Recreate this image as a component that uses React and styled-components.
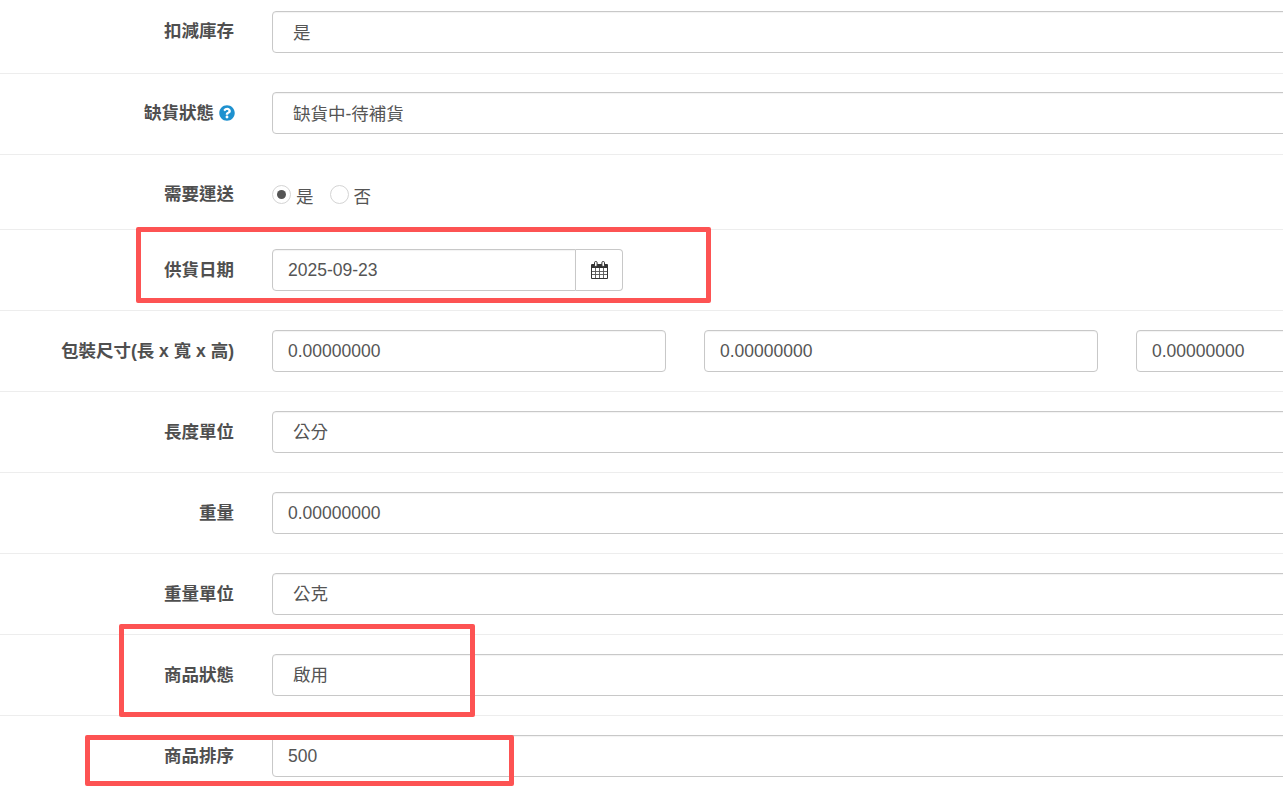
import React from 'react';
import styled, { createGlobalStyle } from 'styled-components';
import { FaQuestionCircle } from 'react-icons/fa';

const GlobalStyle = createGlobalStyle`
  html, body {
    margin: 0;
    height: 100%;
    overflow: hidden;
    background: #ffffff;
  }
  body {
    font-family: "Liberation Sans", "Noto Sans CJK TC", sans-serif;
    font-size: 17.5px;
    color: #555555;
  }
`;

const Page = styled.div`
  position: relative;
  width: 1283px;
  height: 800px;
  overflow: hidden;
`;

const Form = styled.form`
  margin: 0;
`;

const Row = styled.div`
  display: flex;
  align-items: flex-start;
  box-sizing: border-box;
  height: ${({ $height }) => $height || 81}px;
  padding-top: ${({ $top }) => $top ?? 19}px;
  border-bottom: 1px solid #ededed;
  &:last-child {
    border-bottom: none;
  }
`;

const Label = styled.label`
  flex: 0 0 234px;
  display: flex;
  justify-content: flex-end;
  align-items: center;
  gap: 5px;
  height: ${({ $raised }) => ($raised ? '40px' : '42px')};
  margin-right: 38px;
  font-weight: 700;
  font-size: 17.5px;
  line-height: 24px;
  color: #4f4f4f;
  white-space: nowrap;
`;

const Input = styled.input`
  box-sizing: border-box;
  width: ${({ $width }) => $width || '1100px'};
  flex: none;
  height: 42px;
  padding: 1px 15px 0;
  background: #ffffff;
  border: 1px solid #c8c8c8;
  border-radius: 4px;
  font-family: inherit;
  font-size: 17.5px;
  color: #555555;
  outline: none;
  box-shadow: inset 0 1px 1px rgba(0, 0, 0, 0.05);
`;

const SelectInput = styled(Input)`
  padding: 0 20px ${({ $lowered }) => ($lowered ? '1px' : '3px')};
`;

const DateGroup = styled.div`
  display: flex;
  width: 351px;
  height: 42px;
`;

const DateInput = styled(Input)`
  flex: 1;
  width: auto;
  min-width: 0;
  border-radius: 4px 0 0 4px;
`;

const CalendarButton = styled.button`
  flex: 0 0 47px;
  display: flex;
  align-items: center;
  justify-content: center;
  padding: 0;
  background: #ffffff;
  border: 1px solid #c8c8c8;
  border-left: none;
  border-radius: 0 4px 4px 0;
  color: #333333;
`;

const SizeInputs = styled.div`
  display: flex;
  gap: 38px;
`;

const RadioGroup = styled.div`
  display: flex;
  align-items: center;
  height: 24px;
  margin-top: 8px;
`;

const RadioOption = styled.span`
  display: flex;
  align-items: center;
  gap: 5px;
  margin-right: 16px;
  font-size: 17.5px;
  line-height: 24px;
`;

const RadioText = styled.span`
  position: relative;
  top: 3px;
`;

const RadioCircle = styled.span`
  box-sizing: border-box;
  width: 19px;
  height: 19px;
  border: 1px solid #d4d4d4;
  border-radius: 50%;
  background: #ffffff;
  display: flex;
  align-items: center;
  justify-content: center;
  &::after {
    content: '';
    display: ${({ $checked }) => ($checked ? 'block' : 'none')};
    width: 9px;
    height: 9px;
    border-radius: 50%;
    background: #555555;
  }
`;

const HelpIcon = styled(FaQuestionCircle)`
  width: 16px;
  height: 16px;
  margin-right: -1px;
  color: #1e91cf;
`;

const Highlight = styled.div`
  position: absolute;
  box-sizing: border-box;
  left: ${({ $x }) => $x}px;
  top: ${({ $y }) => $y}px;
  width: ${({ $w }) => $w}px;
  height: ${({ $h }) => $h}px;
  border: 5px solid #fd5353;
  border-radius: 2px;
  pointer-events: none;
`;

const CalendarIcon = () => (
  <svg width="17" height="18" viewBox="0 0 17 18" aria-hidden="true">
    <path d="M1 3h15a1 1 0 0 1 1 1v13a1 1 0 0 1-1 1H1a1 1 0 0 1-1-1V4a1 1 0 0 1 1-1z" fill="#333" />
    <path d="M1 7h15v10H1z" fill="#fff" />
    <path
      d="M4.5 7v10M8.5 7v10M12.5 7v10M1 10.5h15M1 13.5h15"
      stroke="#555"
      strokeWidth="0.9"
      fill="none"
    />
    <rect x="3.5" y="0.5" width="2.6" height="5" rx="1.2" fill="#fff" stroke="#333" strokeWidth="1" />
    <rect x="10.9" y="0.5" width="2.6" height="5" rx="1.2" fill="#fff" stroke="#333" strokeWidth="1" />
  </svg>
);

const App = () => (
  <Page>
    <GlobalStyle />
    <Form>
      <Row $height={74} $top={11}>
        <Label $raised>扣減庫存</Label>
        <SelectInput $lowered readOnly value="是" />
      </Row>
      <Row $top={18}>
        <Label>
          缺貨狀態
          <HelpIcon />
        </Label>
        <SelectInput $lowered readOnly value="缺貨中-待補貨" />
      </Row>
      <Row $height={75} $top={19}>
        <Label $raised>需要運送</Label>
        <RadioGroup>
          <RadioOption>
            <RadioCircle $checked />
            <RadioText>是</RadioText>
          </RadioOption>
          <RadioOption>
            <RadioCircle />
            <RadioText>否</RadioText>
          </RadioOption>
        </RadioGroup>
      </Row>
      <Row>
        <Label>供貨日期</Label>
        <DateGroup>
          <DateInput readOnly value="2025-09-23" />
          <CalendarButton type="button">
            <CalendarIcon />
          </CalendarButton>
        </DateGroup>
      </Row>
      <Row>
        <Label>包裝尺寸(長 x 寬 x 高)</Label>
        <SizeInputs>
          <Input $width="394px" readOnly value="0.00000000" />
          <Input $width="394px" readOnly value="0.00000000" />
          <Input $width="394px" readOnly value="0.00000000" />
        </SizeInputs>
      </Row>
      <Row>
        <Label>長度單位</Label>
        <SelectInput readOnly value="公分" />
      </Row>
      <Row>
        <Label>重量</Label>
        <Input readOnly value="0.00000000" />
      </Row>
      <Row>
        <Label>重量單位</Label>
        <SelectInput readOnly value="公克" />
      </Row>
      <Row>
        <Label>商品狀態</Label>
        <SelectInput readOnly value="啟用" />
      </Row>
      <Row>
        <Label>商品排序</Label>
        <Input readOnly value="500" />
      </Row>
    </Form>
    <Highlight $x={136} $y={227} $w={575} $h={76} />
    <Highlight $x={119} $y={624} $w={356} $h={93} />
    <Highlight $x={85} $y={735} $w={429} $h={51} />
  </Page>
);

export default App;
